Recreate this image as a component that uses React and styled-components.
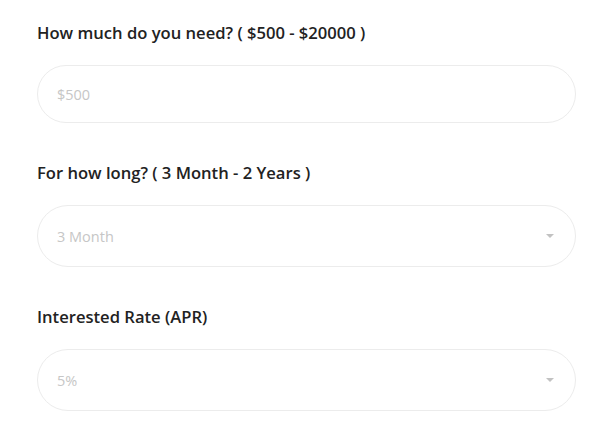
import React from "react";
import styled, { createGlobalStyle } from "styled-components";

const GlobalStyle = createGlobalStyle`
    html, body {
        margin: 0;
        padding: 0;
        background: #ffffff;
    }
    body {
        font-family: "Nunito", "Open Sans", "Noto Sans", sans-serif;
    }
`

const StyledForm = styled.form`
    display: flex;
    flex-direction: column;
    padding: 21px 0 0 37px;
    width: 539px;
`
const StyledField = styled.div`
    display: flex;
    flex-direction: column;
    gap: 20px;
    margin-bottom: 38px;
`
const StyledLabel = styled.label`
    font-family: "Open Sans", "Noto Sans", sans-serif;
    font-size: 16.6px;
    font-weight: 600;
    line-height: 24px;
    color: #222222;
`
const StyledInput = styled.input`
    box-sizing: border-box;
    width: 100%;
    height: ${({ $h }) => $h}px;
    border: 1px solid #ececec;
    border-radius: 32px;
    padding: 0 19px;
    font-family: "Open Sans", "Noto Sans", sans-serif;
    font-size: 14.5px;
    color: #444;
    outline: none;
    background: #fff;
    &::placeholder {
        color: #c6c6c6;
    }
`
const StyledSelect = styled.div`
    box-sizing: border-box;
    width: 100%;
    height: 62px;
    border: 1px solid #ececec;
    border-radius: 32px;
    padding: 0 20px 0 19px;
    display: flex;
    align-items: center;
    justify-content: space-between;
    font-family: "Open Sans", "Noto Sans", sans-serif;
    font-size: 14.5px;
    color: #c6c6c6;
`
const StyledCaret = styled.span`
    width: 0;
    height: 0;
    border-left: 4px solid transparent;
    border-right: 4px solid transparent;
    border-top: 4px solid #c2c2c2;
    margin-right: 1px;
`

export default function App(){
    return(
        <>
            <GlobalStyle/>
            <StyledForm>
                <StyledField>
                    <StyledLabel>How much do you need? ( $500 - $20000 )</StyledLabel>
                    <StyledInput $h={58} placeholder="$500"/>
                </StyledField>
                <StyledField>
                    <StyledLabel>For how long? ( 3 Month - 2 Years )</StyledLabel>
                    <StyledSelect>
                        <span>3 Month</span>
                        <StyledCaret/>
                    </StyledSelect>
                </StyledField>
                <StyledField>
                    <StyledLabel>Interested Rate (APR)</StyledLabel>
                    <StyledSelect>
                        <span>5%</span>
                        <StyledCaret/>
                    </StyledSelect>
                </StyledField>
            </StyledForm>
        </>
    )
}
